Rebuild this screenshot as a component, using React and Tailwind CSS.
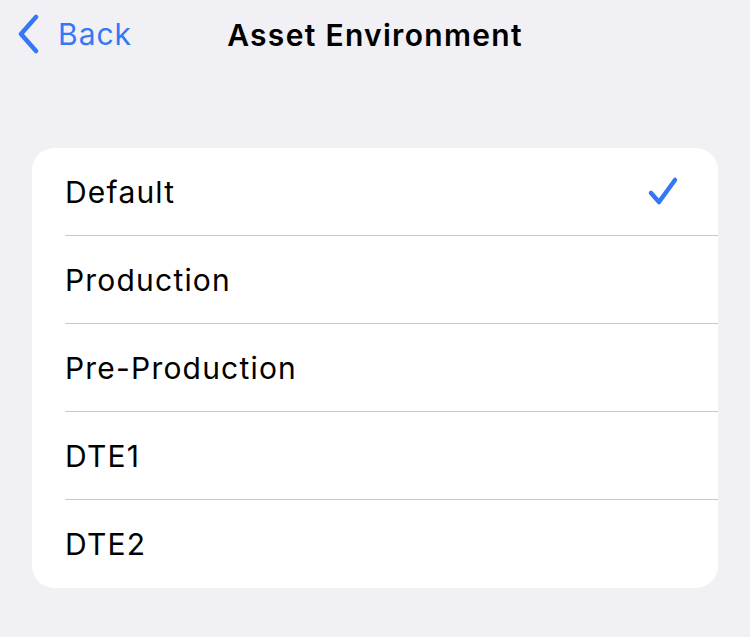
import React from "react";

const options = ["Default", "Production", "Pre-Production", "DTE1", "DTE2"];

const Chevron = () => (
  <svg width="24" height="40" viewBox="0 0 24 40" fill="none">
    <path
      d="M20 3 L5 20 L20 37"
      stroke="#3478f6"
      strokeWidth="4.5"
      strokeLinecap="round"
      strokeLinejoin="round"
    />
  </svg>
);

const Check = () => (
  <svg width="34" height="32" viewBox="0 0 34 32" fill="none">
    <path
      d="M5 17 L13 26 L29 4"
      stroke="#3478f6"
      strokeWidth="4.5"
      strokeLinecap="round"
      strokeLinejoin="round"
    />
  </svg>
);

const App = () => {
  const selected = "Default";

  return (
    <div
      className="w-[750px] h-[637px] bg-[#f0f0f5] text-black"
      style={{ fontFamily: "Inter, 'Noto Sans', sans-serif" }}
    >
      {/* nav bar */}
      <div className="relative h-[70px] flex items-center justify-center">
        <div className="absolute left-[16px] top-[14px] flex items-center gap-[18px]">
          <Chevron />
          <span className="text-[30px] text-[#3478f6] leading-none tracking-[1px]">
            Back
          </span>
        </div>
        <span className="text-[30px] font-semibold tracking-[1.3px] leading-none">
          Asset Environment
        </span>
      </div>

      {/* list */}
      <div className="pt-[78px] px-[32px]">
        <div className="bg-white rounded-[22px] overflow-hidden">
          {options.map((o, i) => (
            <div key={o} className="pl-[33px]">
              <div
                className={
                  "h-[88px] flex items-center justify-between pr-[38px] " +
                  (i < options.length - 1 ? "border-b border-[#c8c8cc]" : "")
                }
              >
                <span className="text-[30px] leading-none tracking-[1.2px]">{o}</span>
                {o === selected && <Check />}
              </div>
            </div>
          ))}
        </div>
      </div>
    </div>
  );
};

export default App;
